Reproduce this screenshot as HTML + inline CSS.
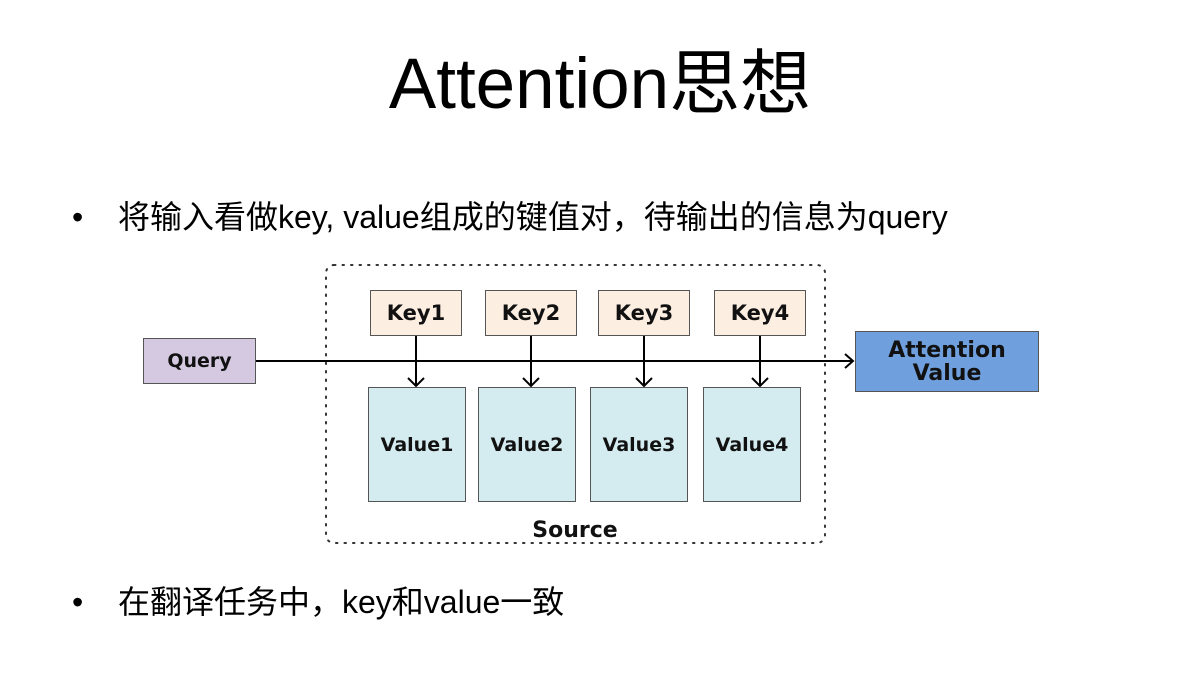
<!DOCTYPE html>
<html><head><meta charset="utf-8"><style>
body{margin:0;width:1200px;height:675px;background:#fff;position:relative;overflow:hidden;font-family:"Liberation Sans","Noto Sans CJK SC",sans-serif;}
.t{position:absolute;left:0;width:1200px;top:45px;text-align:center;font-size:71px;line-height:80px;color:#000;}
.b{position:absolute;left:72px;font-size:32px;line-height:40px;color:#000;}
.b span{position:absolute;left:46px;white-space:nowrap;}
.bx{position:absolute;box-sizing:border-box;border:1.5px solid #555;display:flex;align-items:center;justify-content:center;font-family:"DejaVu Sans",sans-serif;font-weight:bold;color:#111;text-align:center;}
.k{background:#fdeee2;font-size:21px;top:290px;width:92px;height:46px;}
.v{background:#d4ebf0;font-size:19px;top:387px;height:115px;}
</style></head><body>
<div class="t">Attention思想</div>
<div class="b" style="top:197px">•<span>将输入看做key, value组成的键值对，待输出的信息为query</span></div>
<div class="b" style="top:582px">•<span>在翻译任务中，key和value一致</span></div>
<svg style="position:absolute;left:0;top:0" width="1200" height="675">
<rect x="326" y="265" width="499" height="278" rx="8" fill="none" stroke="#333" stroke-width="2" stroke-dasharray="1.5 7" stroke-linecap="round"/>
<line x1="255" y1="361" x2="853" y2="361" stroke="#000" stroke-width="2"/>
<polyline points="845,354 853,361 845,368" fill="none" stroke="#000" stroke-width="2"/>
<g stroke="#000" stroke-width="2" fill="none">
<line x1="416" y1="336" x2="416" y2="386"/><polyline points="408,378 416,386 424,378"/>
<line x1="531" y1="336" x2="531" y2="386"/><polyline points="523,378 531,386 539,378"/>
<line x1="644" y1="336" x2="644" y2="386"/><polyline points="636,378 644,386 652,378"/>
<line x1="760" y1="336" x2="760" y2="386"/><polyline points="752,378 760,386 768,378"/>
</g>
<text x="575" y="537" text-anchor="middle" font-family="DejaVu Sans" font-weight="bold" font-size="22" fill="#111">Source</text>
</svg>
<div class="bx" style="left:143px;top:338px;width:113px;height:46px;background:#d4c9e0;font-size:19px;">Query</div>
<div class="bx k" style="left:370px">Key1</div>
<div class="bx k" style="left:485px">Key2</div>
<div class="bx k" style="left:598px">Key3</div>
<div class="bx k" style="left:714px">Key4</div>
<div class="bx v" style="left:368px;width:98px">Value1</div>
<div class="bx v" style="left:478px;width:98px">Value2</div>
<div class="bx v" style="left:590px;width:98px">Value3</div>
<div class="bx v" style="left:703px;width:98px">Value4</div>
<div class="bx" style="left:855px;top:331px;width:184px;height:61px;background:#6f9fdc;font-size:22px;line-height:23px;">Attention<br>Value</div>
</body></html>
